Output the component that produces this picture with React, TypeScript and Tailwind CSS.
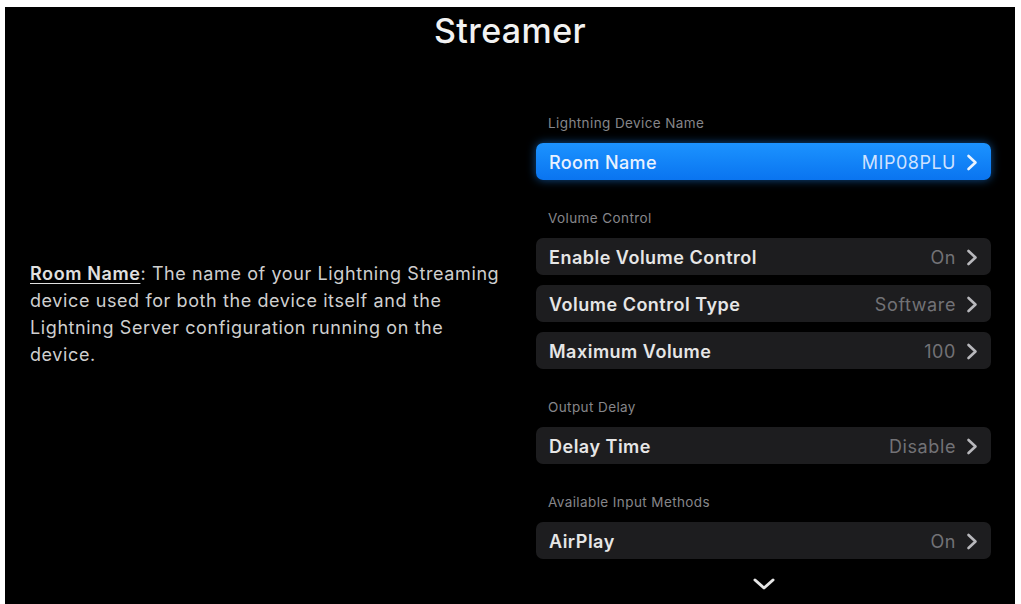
import React from "react";

type Row = { label: string; value: string; active?: boolean };
type Section = { title: string; rows: Row[] };

const sections: Section[] = [
    { title: "Lightning Device Name", rows: [{ label: "Room Name", value: "MIP08PLU", active: true }] },
    {
        title: "Volume Control",
        rows: [
            { label: "Enable Volume Control", value: "On" },
            { label: "Volume Control Type", value: "Software" },
            { label: "Maximum Volume", value: "100" },
        ],
    },
    { title: "Output Delay", rows: [{ label: "Delay Time", value: "Disable" }] },
    { title: "Available Input Methods", rows: [{ label: "AirPlay", value: "On" }] },
];

function Chevron({ className }: { className?: string }) {
    return (
        <svg width="12" height="17" viewBox="0 0 12 17" className={className} fill="none">
            <polyline points="2.5,2 9.5,8.5 2.5,15" stroke="currentColor" strokeWidth="2.6" strokeLinecap="round" strokeLinejoin="round" />
        </svg>
    );
}

function SettingRow({ row }: { row: Row }) {
    return (
        <div
            className={
                row.active
                    ? "flex h-[37px] items-center rounded-[7px] bg-gradient-to-b from-[#1c93ff] to-[#0a74f0] pl-[13px] pr-[13px] pt-[2px] shadow-[0_0_10px_rgba(30,140,255,0.55)]"
                    : "flex h-[37px] items-center rounded-[7px] bg-[#1d1d1f] pl-[13px] pr-[13px] pt-[2px]"
            }
        >
            <span
                className={
                    row.active
                        ? "flex-1 text-[18px] font-medium tracking-[0.4px] text-[#e9f2ff]"
                        : "flex-1 text-[18px] font-semibold tracking-[0.5px] text-[#e6e6e6]"
                }
            >
                {row.label}
            </span>
            <span className={row.active ? "text-[18px] tracking-[0.5px] text-[#cfe2ff]" : "text-[18px] tracking-[0.6px] text-[#727276]"}>
                {row.value}
            </span>
            <Chevron className={row.active ? "ml-[10px] text-[#eaf3ff]" : "ml-[10px] text-[#b8b8bc]"} />
        </div>
    );
}

export default function App() {
    return (
        <div className="min-h-[604px] bg-white pl-[5px] pr-[6px] pt-[7px]" style={{ fontFamily: "Inter, 'Noto Sans', sans-serif" }}>
            <div className="flex h-[597px] flex-col bg-black">
                {/* Title */}
                <h1 className="pt-[4px] text-center text-[34px] font-medium leading-[40px] tracking-[0.4px] text-[#f2f2f2]">Streamer</h1>

                <div className="flex flex-1">
                    {/* Description */}
                    <div className="flex-1 pl-[25px] pr-[10px] pt-[209px]">
                        <p className="whitespace-nowrap text-[18px] leading-[27px] tracking-[0.6px] text-[#cfcfcf]">
                            <span className="font-semibold text-[#e0e0e0] underline decoration-1 underline-offset-[3px]">Room Name</span>: The name of your Lightning
                            Streaming
                            <br />
                            device used for both the device itself and the
                            <br />
                            Lightning Server configuration running on the
                            <br />
                            device.
                        </p>
                    </div>

                    {/* Settings list */}
                    <div className="mr-[24px] flex w-[455px] flex-col pt-[64px]">
                        {sections.map((section, i) => (
                            <div key={section.title} className={i === 0 ? "" : "mt-[30px]"}>
                                <div className="mb-[12px] pl-[12px] text-[13.5px] leading-[16px] tracking-[0.4px] text-[#86868a]">{section.title}</div>
                                <div className="flex flex-col gap-[10px]">
                                    {section.rows.map((row) => (
                                        <SettingRow key={row.label} row={row} />
                                    ))}
                                </div>
                            </div>
                        ))}
                        <div className="mt-[18px] flex justify-center">
                            <svg width="24" height="14" viewBox="0 0 24 14" fill="none">
                                <polyline points="3,3 12,11 21,3" stroke="#e6e6e6" strokeWidth="3" strokeLinecap="round" strokeLinejoin="round" />
                            </svg>
                        </div>
                    </div>
                </div>
            </div>
        </div>
    );
}
